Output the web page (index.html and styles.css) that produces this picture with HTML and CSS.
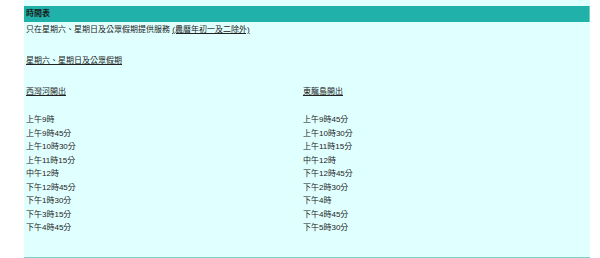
FILE: index.html
```html
<!DOCTYPE html>
<html lang="zh-Hant">
<head>
<meta charset="utf-8">
<title>時間表</title>
<link rel="stylesheet" href="styles.css">
</head>
<body>
<div class="panel">
  <div class="header">時間表</div>
  <p class="note">只在星期六、星期日及公眾假期提供服務 <u>(農曆年初一及二除外)</u></p>
  <p class="sub"><u>星期六、星期日及公眾假期</u></p>
  <div class="cols">
    <div class="col">
      <p class="colhead"><u>西灣河開出</u></p>
      <ul class="times">
        <li>上午9時</li>
        <li>上午9時45分</li>
        <li>上午10時30分</li>
        <li>上午11時15分</li>
        <li>中午12時</li>
        <li>下午12時45分</li>
        <li>下午1時30分</li>
        <li>下午3時15分</li>
        <li>下午4時45分</li>
      </ul>
    </div>
    <div class="col">
      <p class="colhead"><u>東龍島開出</u></p>
      <ul class="times">
        <li>上午9時45分</li>
        <li>上午10時30分</li>
        <li>上午11時15分</li>
        <li>中午12時</li>
        <li>下午12時45分</li>
        <li>下午2時30分</li>
        <li>下午4時</li>
        <li>下午4時45分</li>
        <li>下午5時30分</li>
      </ul>
    </div>
  </div>
</div>
</body>
</html>
```
FILE: styles.css
```css
html, body {
  margin: 0;
  padding: 0;
  background: #ffffff;
}
body {
  font-family: "Liberation Sans", "Noto Sans CJK TC", sans-serif;
  font-size: 8px;
  color: #222;
}
.panel {
  margin-left: 24px;
  width: 566px;
  background: #e0ffff;
  padding-top: 6px;
  padding-bottom: 22px;
  border-bottom: 1px solid #7fcfcf;
}
.header {
  height: 16px;
  line-height: 16px;
  background: #20b2aa;
  border-right: 1px solid #6fd0c8;
  font-weight: bold;
  padding-left: 2px;
  color: #1a1a1a;
}
p {
  margin: 0;
  line-height: 13.5px;
  padding-left: 2px;
}
.note {
  margin-top: 1px;
}
.sub {
  margin-top: 17.5px;
}
.cols {
  display: grid;
  grid-template-columns: 277px 1fr;
  margin-top: 17.5px;
}
.times {
  list-style: none;
  margin: 14.5px 0 0 0;
  padding: 0 0 0 2px;
}
.times li {
  line-height: 13.5px;
}
u {
  text-underline-offset: 1px;
}
```
